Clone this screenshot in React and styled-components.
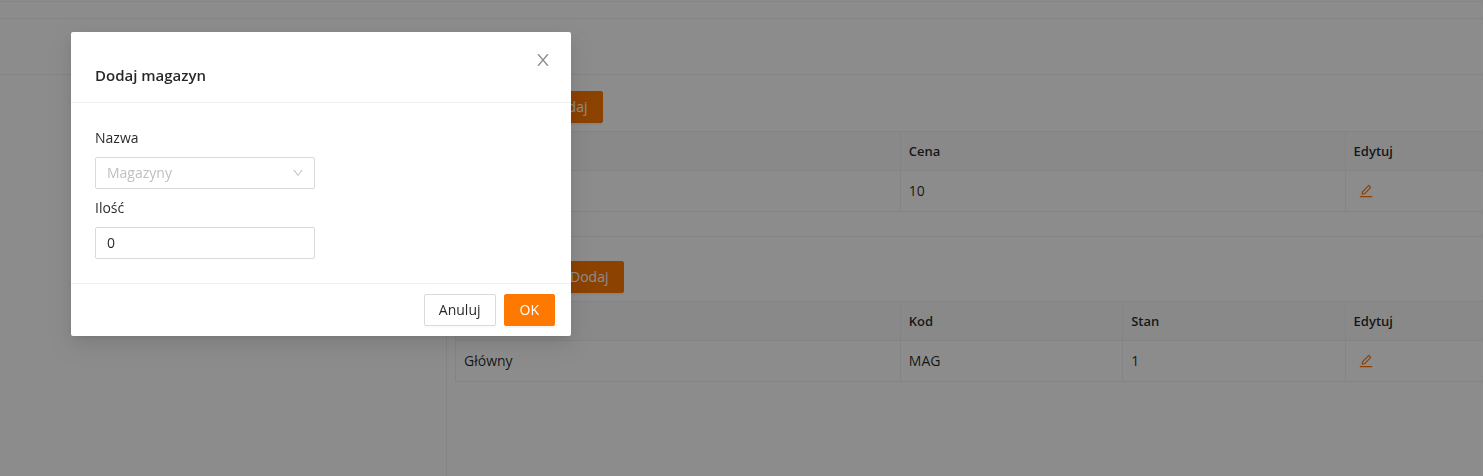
import React, { useState } from "react"
import styled, { createGlobalStyle } from "styled-components"
import { AiOutlineDown, AiOutlineEdit } from "react-icons/ai"

const GlobalStyle = createGlobalStyle`
  * {
    box-sizing: border-box;
  }
  body {
    margin: 0;
    background: #fff;
    color: rgba(0, 0, 0, 0.85);
    font: 14px/22px "Open Sans", "Noto Sans", sans-serif;
    overflow: hidden;
  }
  button, input, select {
    font: inherit;
    color: inherit;
  }
`

const Page = styled.div`
  display: flex;
  flex-direction: column;
  min-height: 100vh;
`

const TopBar = styled.div`
  height: 19px;
  border-bottom: 1px solid #f0f0f0;
  &::before {
    content: "";
    display: block;
    height: 1px;
    border-bottom: 1px solid #f0f0f0;
  }
`

const Header = styled.header`
  height: 56px;
  border-bottom: 1px solid #f0f0f0;
`

const Columns = styled.div`
  display: flex;
  flex: 1;
`

const Sidebar = styled.aside`
  flex: 0 0 447px;
  border-right: 1px solid #f0f0f0;
`

const Content = styled.main`
  flex: 1;
  min-width: 0;
  padding: 16px 0 16px 8px;
  overflow: hidden;
`

const Toolbar = styled.div`
  display: flex;
  margin-bottom: 8px;
  padding-left: ${({ $indent }) => $indent}px;
`

const Divider = styled.hr`
  margin: 24px 0;
  border: 0;
  border-top: 1px solid #f0f0f0;
`

const Table = styled.table`
  width: 100%;
  min-width: 1113px;
  table-layout: fixed;
  border-collapse: separate;
  border-spacing: 0;
  border-top: 1px solid #f0f0f0;
  border-left: 1px solid #f0f0f0;
  th, td {
    padding: 8px;
    text-align: left;
    border-right: 1px solid #f0f0f0;
    border-bottom: 1px solid #f0f0f0;
  }
  th {
    background: #fafafa;
    font-size: 13px;
    font-weight: 600;
  }
`

const Col = styled.col`
  width: ${({ $share }) => $share}%;
`

const Button = styled.button`
  height: 32px;
  padding: 0 ${({ $primary }) => ($primary ? 15 : 14)}px;
  border: 1px solid ${({ $primary }) => ($primary ? "#ff7800" : "#d9d9d9")};
  border-radius: 2px;
  background: ${({ $primary }) => ($primary ? "#ff7800" : "#fff")};
  color: ${({ $primary }) => ($primary ? "#fff" : "inherit")};
  box-shadow: 0 2px 0 rgba(0, 0, 0, ${({ $primary }) => ($primary ? 0.045 : 0.015)});
  cursor: pointer;
`

const EditButton = styled.button`
  display: flex;
  align-items: center;
  height: 24px;
  padding: 0 4px;
  border: 0;
  background: none;
  color: #ff7800;
  cursor: pointer;
`

const Mask = styled.div`
  position: fixed;
  inset: 0;
  padding: 32px 71px;
  background: rgba(0, 0, 0, 0.45);
`

const Modal = styled.form`
  position: relative;
  width: 100%;
  max-width: 500px;
  border-radius: 2px;
  background: #fff;
  box-shadow: 0 3px 6px -4px rgba(0, 0, 0, 0.12), 0 6px 16px 0 rgba(0, 0, 0, 0.08),
    0 9px 28px 8px rgba(0, 0, 0, 0.05);
`

const ModalHeader = styled.div`
  padding: 32px 24px 16px;
  border-bottom: 1px solid #f0f0f0;
  h1 {
    margin: 0;
    font-size: 15px;
    font-weight: 600;
    line-height: 22px;
  }
`

const CloseButton = styled.button`
  position: absolute;
  top: 0;
  right: 0;
  display: flex;
  align-items: center;
  justify-content: center;
  width: 56px;
  height: 56px;
  padding: 0;
  border: 0;
  background: none;
  color: rgba(0, 0, 0, 0.45);
  cursor: pointer;
`

const ModalBody = styled.div`
  display: flex;
  flex-direction: column;
  align-items: flex-start;
  gap: 8px;
  padding: 24px;
`

const ModalFooter = styled.div`
  display: flex;
  justify-content: flex-end;
  gap: 8px;
  padding: 10px 16px;
  border-top: 1px solid #f0f0f0;
`

const Input = styled.input`
  width: 220px;
  height: 32px;
  padding: 0 11px 2px;
  border: 1px solid #d9d9d9;
  border-radius: 2px;
  background: #fff;
`

const SelectBox = styled.div`
  display: grid;
  align-items: center;
  width: 220px;
  select {
    grid-area: 1 / 1;
    width: 100%;
    height: 32px;
    padding: 0 11px;
    border: 1px solid #d9d9d9;
    border-radius: 2px;
    background: #fff;
    color: #bfbfbf;
    appearance: none;
  }
  svg {
    grid-area: 1 / 1;
    justify-self: end;
    margin-right: 11px;
    color: rgba(0, 0, 0, 0.25);
    pointer-events: none;
  }
`

const CloseIcon = () => (
  <svg width="16" height="16" viewBox="64 64 896 896" fill="currentColor" aria-hidden="true">
    <path d="M563.8 512l262.5-312.9c4.4-5.2.7-13.1-6.1-13.1h-79.8c-4.7 0-9.2 2.1-12.3 5.7L511.6 449.8 295.1 191.7c-3-3.6-7.5-5.7-12.3-5.7H203c-6.8 0-10.5 7.9-6.1 13.1L459.4 512 196.9 824.9A7.95 7.95 0 0 0 203 838h79.8c4.7 0 9.2-2.1 12.3-5.7l216.5-258.1 216.5 258.1c3 3.6 7.5 5.7 12.3 5.7h79.8c6.8 0 10.5-7.9 6.1-13.1L563.8 512z" />
  </svg>
)

const EditCell = () => (
  <td>
    <EditButton type="button" aria-label="Edytuj">
      <AiOutlineEdit size={16} />
    </EditButton>
  </td>
)

const PriceTable = () => (
  <Table>
    <colgroup>
      <Col $share={40} />
      <Col $share={40} />
      <Col $share={20} />
    </colgroup>
    <thead>
      <tr>
        <th></th>
        <th>Cena</th>
        <th>Edytuj</th>
      </tr>
    </thead>
    <tbody>
      <tr>
        <td></td>
        <td>10</td>
        <EditCell />
      </tr>
    </tbody>
  </Table>
)

const StockTable = () => (
  <Table>
    <colgroup>
      <Col $share={40} />
      <Col $share={20} />
      <Col $share={20} />
      <Col $share={20} />
    </colgroup>
    <thead>
      <tr>
        <th></th>
        <th>Kod</th>
        <th>Stan</th>
        <th>Edytuj</th>
      </tr>
    </thead>
    <tbody>
      <tr>
        <td>Główny</td>
        <td>MAG</td>
        <td>1</td>
        <EditCell />
      </tr>
    </tbody>
  </Table>
)

const StockModal = () => {
  const [amount, setAmount] = useState("0")

  return (
    <Mask>
      <Modal role="dialog" aria-labelledby="modal-title" onSubmit={e => e.preventDefault()}>
        <CloseButton type="button" aria-label="Zamknij">
          <CloseIcon />
        </CloseButton>
        <ModalHeader>
          <h1 id="modal-title">Dodaj magazyn</h1>
        </ModalHeader>
        <ModalBody>
          <label htmlFor="warehouse">Nazwa</label>
          <SelectBox>
            <select id="warehouse" defaultValue="">
              <option value="">Magazyny</option>
            </select>
            <AiOutlineDown size={12} />
          </SelectBox>
          <label htmlFor="amount">Ilość</label>
          <Input id="amount" value={amount} onChange={e => setAmount(e.target.value)} />
        </ModalBody>
        <ModalFooter>
          <Button type="button">Anuluj</Button>
          <Button type="submit" $primary>OK</Button>
        </ModalFooter>
      </Modal>
    </Mask>
  )
}

const App = () => (
  <>
    <GlobalStyle />
    <Page>
      <TopBar />
      <Header />
      <Columns>
        <Sidebar />
        <Content>
          <Toolbar $indent={78}>
            <Button type="button" $primary>Dodaj</Button>
          </Toolbar>
          <PriceTable />
          <Divider />
          <Toolbar $indent={99}>
            <Button type="button" $primary>Dodaj</Button>
          </Toolbar>
          <StockTable />
        </Content>
      </Columns>
    </Page>
    <StockModal />
  </>
)

export default App
